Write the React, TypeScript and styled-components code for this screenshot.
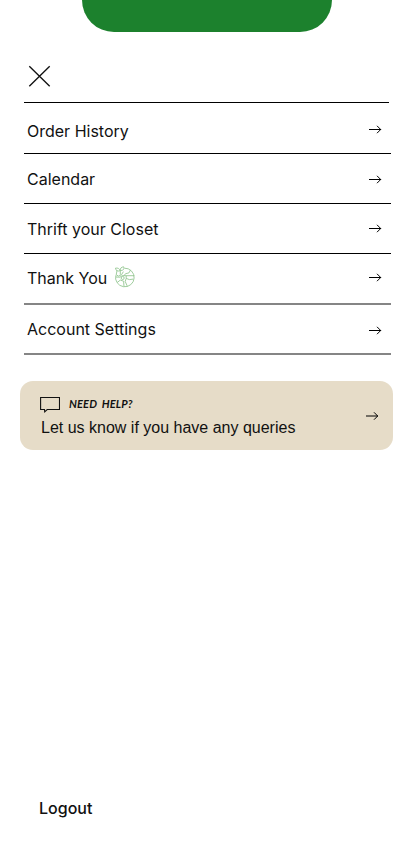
import React from "react";
import styled, { createGlobalStyle } from "styled-components";

const GlobalStyle = createGlobalStyle`
  * { box-sizing: border-box; }
  body { margin: 0; background: #fff; }
`;

const Screen = styled.main`
  display: flex;
  flex-direction: column;
  width: 414px;
  height: 859px;
  overflow: hidden;
  background: #fff;
  color: #111;
  font-family: Inter, sans-serif;
  font-size: 16px;
`;

const TopTab = styled.div`
  flex: none;
  width: 250px;
  height: 32px;
  margin-left: 82px;
  border-radius: 0 0 32px 32px;
  background: #1c812d;
`;

const Header = styled.header`
  flex: none;
  width: 365px;
  height: 71px;
  margin-left: 24px;
  padding: 33px 0 0 4px;
  border-bottom: 1px solid #000;
`;

const PlainButton = styled.button`
  display: block;
  padding: 0;
  border: 0;
  background: none;
  color: inherit;
  font: inherit;
  text-align: left;
  cursor: pointer;
`;

const Menu = styled.nav`
  flex: none;
  width: 367px;
  margin-left: 24px;
`;

const MenuRow = styled(PlainButton)<{ $height: number; $soft?: boolean }>`
  display: flex;
  align-items: flex-start;
  justify-content: space-between;
  width: 100%;
  height: ${(p) => p.$height}px;
  padding: 0 9px 0 3px;
  border-bottom: ${(p) => (p.$soft ? "2px solid #858585" : "1px solid #000")};
`;

const Label = styled.span<{ $top: number }>`
  display: flex;
  gap: 7px;
  padding-top: ${(p) => p.$top}px;
  line-height: 20px;
  white-space: nowrap;
`;

const GlobeBox = styled.span`
  display: flex;
  height: 22px;
  margin-top: -2px;
`;

const ArrowBox = styled.span<{ $top: number }>`
  display: flex;
  padding-top: ${(p) => p.$top}px;
`;

const HelpCard = styled(PlainButton)`
  display: flex;
  flex: none;
  justify-content: space-between;
  width: 373px;
  height: 69px;
  margin: 26px 0 0 20px;
  padding: 15px 14px 0 20px;
  border-radius: 13px;
  background: #e6dcc8;
`;

const HelpTitle = styled.span`
  display: flex;
  gap: 9px;
  height: 18px;
`;

const HandNote = styled.span`
  font: italic 700 11px/15px Lato, sans-serif;
  letter-spacing: 0.15px;
  word-spacing: 2px;
  white-space: nowrap;
`;

const HelpText = styled.span`
  display: block;
  padding: 4px 0 0 1px;
  font: 16px/20px "Liberation Sans", Arial, sans-serif;
`;

const Logout = styled(PlainButton)`
  margin: auto 0 41px 39px;
  font-weight: 500;
  line-height: 20px;
`;

const Arrow = ({ y = 5.5 }: { y?: number }) => (
  <svg width="13" height="11" viewBox="0 0 13 11" fill="none" stroke="#000">
    <path d={`M0 ${y}h12`} />
    <path d={`M8 ${y - 3.7}L11.7 ${y}L8 ${y + 3.7}`} />
  </svg>
);

const CloseIcon = () => (
  <svg width="23" height="23" viewBox="0 0 23 23" fill="none" stroke="#111" strokeWidth="1.35" display="block">
    <path d="M1.3 1.3L21.7 21.2M21.7 1.3L1.3 21.2" />
  </svg>
);

const GlobeIcon = () => (
  <svg width="22" height="22" viewBox="0 0 22 22" fill="none" stroke="#8fc48d" strokeWidth=".85">
    <path d="M10.5 2.2a9.3 9.3 0 1 1-8.7 7.1" />
    <path d="M1.4 2.2c2.4-.5 4 .2 4.8 2.5-2.6.9-4.3.1-4.8-2.5ZM6.4 4.6C6 2.4 7.2 1 9.7.8c.9 2.1-.4 3.8-3.3 3.8Z" />
    <path d="M3 4.5L2.2 8.8l2.4 1.3 3-1.5 1.8-3M6.3 4.8v3.8M2 11l4 .2 2.2-1.5h12.2M10 9.7l1.5-2 3.4-.8 1.7-3" />
    <circle cx="8.7" cy="12" r="1.5" />
    <path d="M3.2 16.5l3.1-2.4 3.3 1.1.4 5.4M12.2 10v2.4l3.2 1.2 3.8-.5M12.2 12.5l-1 3 2.2 4.8" />
  </svg>
);

const ChatIcon = () => (
  <svg width="20" height="18" viewBox="0 0 20 18" fill="none" stroke="#111" strokeWidth="1.1">
    <path d="M.6 1.5h18.9v12H7.2l-2.5 2.3-.2-2.3H.6Z" />
  </svg>
);

const items = [
  { name: "Order History", height: 51, label: 18, arrow: 21 },
  { name: "Calendar", height: 50, label: 15, arrow: 20 },
  { name: "Thrift your Closet", height: 50, label: 15, arrow: 19 },
  { name: "Thank You", height: 51, label: 14, arrow: 18, soft: true, globe: true },
  { name: "Account Settings", height: 50, label: 14, arrow: 20, soft: true },
];

export default function App() {
  return (
    <>
      <GlobalStyle />
      <Screen>
        <TopTab />
        <Header>
          <PlainButton aria-label="Close menu"><CloseIcon /></PlainButton>
        </Header>
        <Menu>
          {items.map((item) => (
            <MenuRow key={item.name} $height={item.height} $soft={item.soft}>
              <Label $top={item.label}>
                {item.name}
                {item.globe && <GlobeBox><GlobeIcon /></GlobeBox>}
              </Label>
              <ArrowBox $top={item.arrow}><Arrow /></ArrowBox>
            </MenuRow>
          ))}
        </Menu>
        <HelpCard>
          <span>
            <HelpTitle>
              <ChatIcon />
              <HandNote>NEED HELP?</HandNote>
            </HelpTitle>
            <HelpText>Let us know if you have any queries</HelpText>
          </span>
          <ArrowBox $top={15}><Arrow y={5} /></ArrowBox>
        </HelpCard>
        <Logout>Logout</Logout>
      </Screen>
    </>
  );
}
